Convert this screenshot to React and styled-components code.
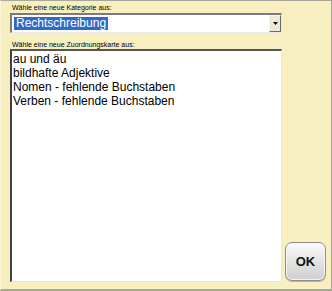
import React from "react";
import styled, { createGlobalStyle } from "styled-components";

const Global = createGlobalStyle`
  html, body { margin: 0; padding: 0; background: #f7efc0; }
  * { box-sizing: border-box; }
`;

const Window = styled.div`
  width: 332px;
  height: 291px;
  background: #f7efc0;
  border-top: 1px solid #a9a79a;
  border-right: 1px solid #a9a79a;
  border-bottom: 2px solid #a9a79a;
  border-left: 1px solid #fbf6da;
  padding: 0 0 7px 9px;
  display: grid;
  grid-template-columns: 272px 1fr;
  grid-template-rows: 12px 20px 16px 1fr;
  font-family: "Liberation Sans", Arial, sans-serif;
`;

const Label = styled.div`
  grid-column: 1 / 2;
  font-size: 7px;
  line-height: 8px;
  color: #000;
  padding: 0 0 ${(p) => (p.$top ? "1px" : "0")} 2px;
  align-self: end;
  white-space: nowrap;
`;

const Combo = styled.div`
  grid-column: 1 / 2;
  display: flex;
  align-items: stretch;
  background: #fff;
  border-top: 2px solid #7a7a7a;
  border-left: 2px solid #7a7a7a;
  border-right: 1px solid #e8e8e8;
  border-bottom: 1px solid #e8e8e8;
  padding: 1px 0 1px 2px;
`;

const ComboValue = styled.div`
  flex: 1;
  display: flex;
  align-items: center;
`;

const Selected = styled.span`
  background: #3169c6;
  color: #fff;
  font-size: 12px;
  line-height: 13px;
  height: 13px;
  padding: 0 2px 0 2px;
`;

const DropButton = styled.div`
  width: 12px;
  background: #ece9d8;
  border-top: 1px solid #f4f4f4;
  border-left: 1px solid #f4f4f4;
  border-right: 1px solid #6c6c6c;
  border-bottom: 1px solid #6c6c6c;
  display: flex;
  align-items: center;
  justify-content: center;
  margin: -1px 0 -1px 0;
`;

const ListBox = styled.div`
  grid-column: 1 / 2;
  background: #fff;
  border-top: 2px solid #555;
  border-left: 2px solid #404040;
  border-right: 1px solid #e6e6e6;
  border-bottom: 1px solid #dfe3f0;
  padding: 1px 0 0 1px;
  display: flex;
  flex-direction: column;
`;

const Item = styled.div`
  font-size: 12px;
  line-height: 14px;
  color: #000;
  white-space: nowrap;
`;

const Side = styled.div`
  grid-column: 2 / 3;
  grid-row: 4 / 5;
  display: flex;
  align-items: flex-end;
  padding: 0 0 1px 3px;
`;

const OkButton = styled.button`
  width: 41px;
  height: 39px;
  border-radius: 7px;
  border: 1px solid #8e8e8e;
  background: linear-gradient(#fbfbfb 0%, #e6e6e6 45%, #cfcfcf 100%);
  box-shadow: inset 0 0 0 1px #f4f4f4, 0 1px 0 #b8b49a;
  font-family: "Liberation Sans", Arial, sans-serif;
  font-weight: bold;
  font-size: 13px;
  color: #111;
  padding: 0;
  cursor: pointer;
`;

export default function App() {
  return (
    <>
      <Global />
      <Window>
        <Label $top>Wähle eine neue Kategorie aus:</Label>
        <Combo>
          <ComboValue>
            <Selected>Rechtschreibung</Selected>
          </ComboValue>
          <DropButton>
            <svg width="5" height="3" viewBox="0 0 5 3">
              <path d="M0 0H5L2.5 3Z" fill="#000" />
            </svg>
          </DropButton>
        </Combo>
        <Label>Wähle eine neue Zuordnungskarte aus:</Label>
        <ListBox>
          <Item>au und äu</Item>
          <Item>bildhafte Adjektive</Item>
          <Item>Nomen - fehlende Buchstaben</Item>
          <Item>Verben - fehlende Buchstaben</Item>
        </ListBox>
        <Side>
          <OkButton>OK</OkButton>
        </Side>
      </Window>
    </>
  );
}
